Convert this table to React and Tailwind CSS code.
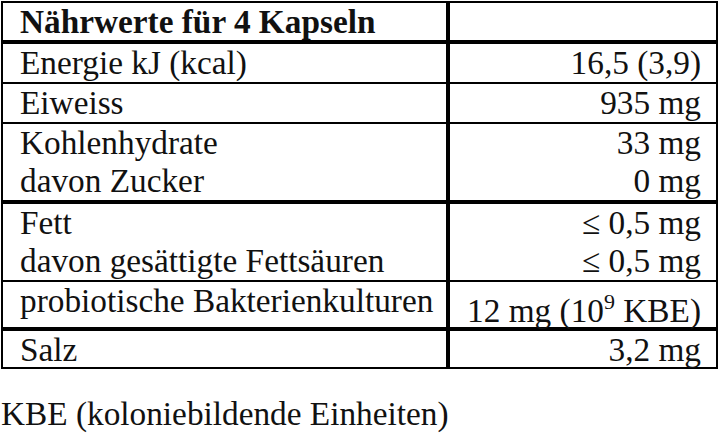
const rows = [
  { left: ["Energie kJ (kcal)"], right: ["16,5 (3,9)"], border: "border-b-2" },
  { left: ["Eiweiss"], right: ["935 mg"], border: "border-b-2" },
  { left: ["Kohlenhydrate", "davon Zucker"], right: ["33 mg", "0 mg"], border: "border-b-4" },
  { left: ["Fett", "davon gesättigte Fettsäuren"], right: ["≤ 0,5 mg", "≤ 0,5 mg"], border: "border-b-2" },
];

export default function App() {
  return (
    <div className="w-[720px] h-[441px] bg-white text-[#111] font-['Liberation_Serif',serif] text-[33.3px] leading-[38px]">
      <div className="ml-px mt-px w-[717px] border-2 border-black">
        {/* header */}
        <div className="flex border-b-4 border-black">
          <div className="w-[447px] border-r-4 border-black pl-[17px] h-[37px] font-bold">
            Nährwerte für 4 Kapseln
          </div>
          <div className="flex-1" />
        </div>

        {rows.map((r, i) => (
          <div key={i} className={`flex border-black ${r.border}`}>
            <div className="w-[447px] border-r-4 border-black pl-[17px]">
              {r.left.map((t) => <div key={t}>{t}</div>)}
            </div>
            <div className="flex-1 pr-[15px] text-right">
              {r.right.map((t, j) => <div key={j}>{t}</div>)}
            </div>
          </div>
        ))}

        <div className="flex border-b-4 border-black h-[49px]">
          <div className="w-[447px] border-r-4 border-black pl-[17px]">
            probiotische Bakterienkulturen
          </div>
          <div className="flex-1 pr-[15px] text-right pt-[10px]">
            12 mg (10<sup className="text-[22px] -top-[13px]">9</sup> KBE)
          </div>
        </div>

        <div className="flex h-[36px]">
          <div className="w-[447px] border-r-4 border-black pl-[17px]">Salz</div>
          <div className="flex-1 pr-[15px] text-right">3,2 mg</div>
        </div>
      </div>

      <p className="mt-[26px] pl-px">KBE (koloniebildende Einheiten)</p>
    </div>
  );
}
